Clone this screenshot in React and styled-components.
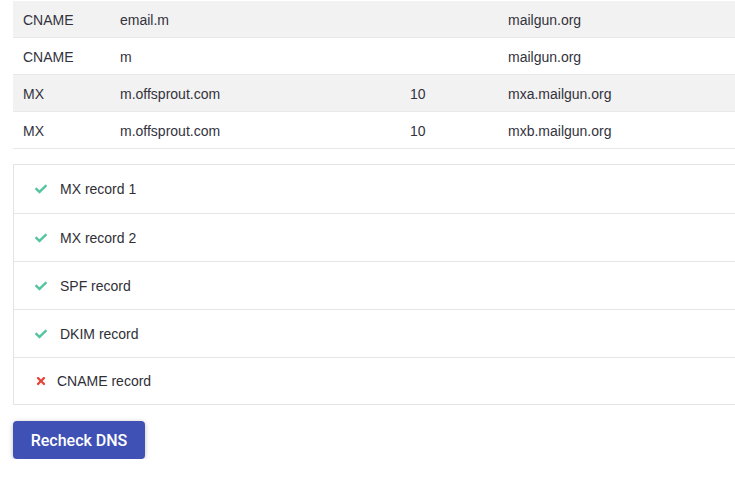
import React from 'react';
import styled, { createGlobalStyle } from 'styled-components';
import { FaCheck, FaTimes } from 'react-icons/fa';

const GlobalStyle = createGlobalStyle`
    html, body {
        margin: 0;
        padding: 0;
        background: #fff;
    }
    body {
        font-family: "Liberation Sans", Arial, sans-serif;
        color: #33333d;
    }
`;

const records = [
    { type: 'CNAME', host: 'email.m', priority: '', value: 'mailgun.org' },
    { type: 'CNAME', host: 'm', priority: '', value: 'mailgun.org' },
    { type: 'MX', host: 'm.offsprout.com', priority: '10', value: 'mxa.mailgun.org' },
    { type: 'MX', host: 'm.offsprout.com', priority: '10', value: 'mxb.mailgun.org' },
];

const checks = [
    { name: 'MX record 1', ok: true },
    { name: 'MX record 2', ok: true },
    { name: 'SPF record', ok: true },
    { name: 'DKIM record', ok: true },
    { name: 'CNAME record', ok: false },
];

export default function App() {
    return (
        <>
            <GlobalStyle />
            <SPage>
                <STable>
                    {records.map((r, i) => (
                        <SRow key={i} $striped={i % 2 === 0}>
                            <SCell $w={97}>{r.type}</SCell>
                            <SCell $w={290}>{r.host}</SCell>
                            <SCell $w={98}>{r.priority}</SCell>
                            <SCell>{r.value}</SCell>
                        </SRow>
                    ))}
                </STable>
                <SList>
                    {checks.map((c) => (
                        <SItem key={c.name}>
                            <SIcon $ok={c.ok}>
                                {c.ok ? <FaCheck size={12} /> : <FaTimes size={12} />}
                            </SIcon>
                            <SLabel>{c.name}</SLabel>
                        </SItem>
                    ))}
                </SList>
                <SButton>Recheck DNS</SButton>
            </SPage>
        </>
    );
}

const SPage = styled.div`
    padding: 1px 0 0 13px;
`;

const STable = styled.div`
    display: flex;
    flex-direction: column;
`;

const SRow = styled.div`
    display: flex;
    align-items: center;
    height: 37px;
    box-sizing: border-box;
    padding: 2px 0 0 10px;
    font-size: 14px;
    background: ${(p) => (p.$striped ? '#f2f2f2' : '#fff')};
    border-bottom: 1px solid #e8e8e8;
`;

const SCell = styled.div`
    flex: ${(p) => (p.$w ? `0 0 ${p.$w}px` : '1')};
`;

const SList = styled.div`
    margin-top: 15px;
    border: 1px solid #e4e4e4;
    border-right: none;
`;

const SItem = styled.div`
    display: flex;
    align-items: center;
    height: 48px;
    box-sizing: border-box;
    padding-left: 21px;
    font-size: 14px;
    & + & {
        border-top: 1px solid #e4e4e4;
    }
    &:last-child {
        height: 47px;
    }
`;

const SIcon = styled.span`
    display: flex;
    align-items: center;
    width: ${(p) => (p.$ok ? '25px' : '22px')};
    color: ${(p) => (p.$ok ? '#55c4a0' : '#e5443a')};
`;

const SLabel = styled.span`
    color: #2f2f36;
`;

const SButton = styled.button`
    margin-top: 16px;
    width: 132px;
    height: 38px;
    background: #3f51b5;
    color: #fff;
    border: none;
    border-radius: 4px;
    font-family: Roboto, "Liberation Sans", Arial, sans-serif;
    font-size: 16px;
    font-weight: 500;
    box-shadow: 0 1px 5px rgba(0, 0, 0, 0.25);
    cursor: pointer;
`;
